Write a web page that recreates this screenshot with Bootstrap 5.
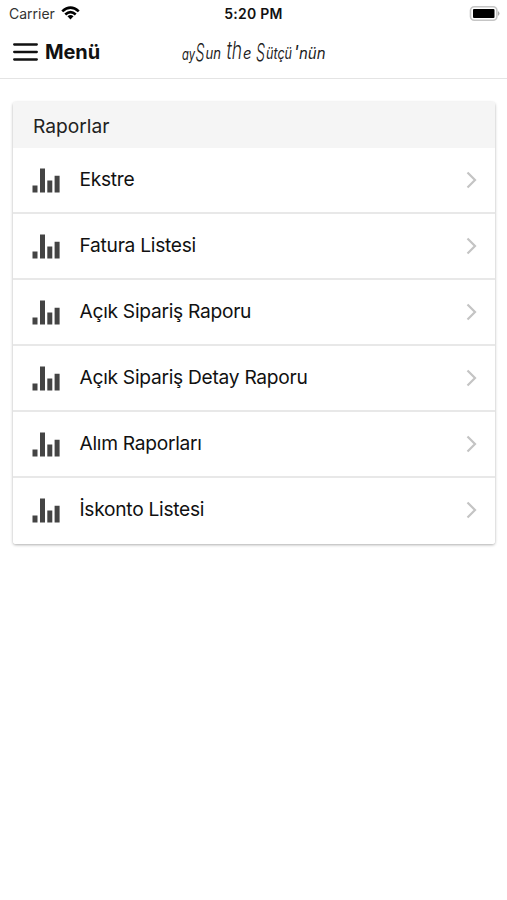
<!DOCTYPE html>
<html lang="tr">
<head>
<meta charset="utf-8">
<meta name="viewport" content="width=device-width, initial-scale=1">
<title>Raporlar</title>
<link href="https://cdn.jsdelivr.net/npm/bootstrap@5.3.0/dist/css/bootstrap.min.css" rel="stylesheet">
<style>
body{font-family:Inter,"Liberation Sans",sans-serif;color:#111;background:#fff;min-height:900px}
.status{height:28px;padding:0 7px 0 9px;font-size:13.5px;line-height:27px}
.status>*{flex:1 1 0}
.carrier{color:#333;font-size:14px}
.carrier span{padding-bottom:2px}
.clock{font-weight:600;font-size:14px;letter-spacing:.25px;padding-right:2px}
.topbar{height:51px;border-bottom:1px solid #e4e4e4;padding:0 13px}
.topbar>*{flex:1 1 0}
.menu-btn{font-size:20px;font-weight:700;line-height:24px;color:#111;gap:7px}
.menu-btn span{padding-top:1px;letter-spacing:-.1px}
.reports{margin:23px 12px 0 13px;border-radius:3px;box-shadow:0 1px 3px rgba(0,0,0,.32)}
.reports-head{height:46px;background:#f5f5f5;padding:0 20px;font-size:19.2px;color:#222;line-height:49px;border-radius:3px 3px 0 0}
.report-row{height:66px;padding:0 18px 0 19px;border-color:#e8e8e8;font-size:19.2px;letter-spacing:-.28px;color:#111}
.list-group-flush>.report-row{border-width:0 0 2px}
.list-group-flush>.report-row:last-child{border-bottom-width:0;padding-bottom:2px;border-radius:0 0 3px 3px}
.report-name{margin-left:19.500px;line-height:24px;padding-bottom:3px}
.report-row .ms-auto{margin-bottom:1px}
.wordmark{flex:none;font-family:Inter,"Liberation Sans",sans-serif;font-style:italic;font-size:15px}
.wordmark .tall{font-size:24px;font-weight:300}
</style>
<script src="https://cdn.jsdelivr.net/npm/bootstrap@5.3.0/dist/js/bootstrap.bundle.min.js"></script>
</head>
<body>
<svg class="d-none">
  <symbol id="bars" viewBox="0 0 28 25"><path fill="#444" d="M.5 17.5h5v7h-5zM8 .5h5v24H8zM15.3 12.5h5v12h-5zM22.6 7.8h5v16.7h-5z"/></symbol>
  <symbol id="chev" viewBox="0 0 11 18"><path d="M1.500 1.500 9 9l-7.500 7.500" fill="none" stroke="#c4c4c4" stroke-width="2.200"/></symbol>
</svg>
<div class="status d-flex">
  <div class="d-flex align-items-center carrier"><span>Carrier</span>
    <svg width="19" height="14" viewBox="0 0 20 14" fill="none" stroke="#000" stroke-width="2.800" style="margin:0 0 2px 6px"><path d="M1.300 5.300Q10-2.700 18.700 5.300M4.500 8.500Q10 3.500 15.500 8.500"/><path d="M6.800 10.500Q10 7.700 13.200 10.500L10 13.800z" fill="#000" stroke="none"/></svg>
  </div>
  <div class="clock text-center">5:20 PM</div>
  <div class="d-flex justify-content-end align-items-center">
    <svg width="31" height="15" viewBox="0 0 31 15" style="margin-bottom:2px"><rect x="1.500" y=".8" width="26.400" height="13.400" rx="3.800" fill="#fff" stroke="#c5c5c5" stroke-width="1.600"/><rect x="4" y="3" width="21.500" height="9" rx="1" fill="#000"/><path d="M29 5q3 2.500 0 5z" fill="#aaa"/></svg>
  </div>
</div>
<nav class="topbar d-flex align-items-center">
  <div><a class="menu-btn d-inline-flex align-items-center text-decoration-none" href="#">
    <svg width="25" height="18" viewBox="0 0 25 18" stroke="#111" stroke-width="2.300" stroke-linecap="round"><path d="M1.200 1.500h22.600M1.200 9h22.600M1.200 16.500h22.600"/></svg><span>Menü</span></a></div>
  <svg class="wordmark" width="148" height="40" viewBox="180 36 148 40" fill="#222">
    <text x="182" y="63" textLength="13" lengthAdjust="spacingAndGlyphs">ay</text>
    <text class="tall" x="195.500" y="64" textLength="9" lengthAdjust="spacingAndGlyphs">S</text>
    <text x="205.500" y="62" textLength="15.500" lengthAdjust="spacingAndGlyphs">un</text>
    <text class="tall" x="226.500" y="62" textLength="15.500" lengthAdjust="spacingAndGlyphs">th</text>
    <text x="243" y="62" textLength="8.500" lengthAdjust="spacingAndGlyphs">e</text>
    <text class="tall" x="256" y="64" textLength="9" lengthAdjust="spacingAndGlyphs">S</text>
    <text x="266" y="62" textLength="26" lengthAdjust="spacingAndGlyphs">ütçü</text>
    <text x="293.500" y="62" font-size="18">'</text>
    <text x="299" y="62" textLength="26.500" lengthAdjust="spacingAndGlyphs">nün</text>
  </svg>
  <div></div>
</nav>
<main class="reports">
  <div class="reports-head">Raporlar</div>
  <div class="list-group list-group-flush">
    <a href="#" class="list-group-item report-row d-flex align-items-center"><svg width="28" height="25"><use href="#bars"/></svg><span class="report-name">Ekstre</span><svg class="ms-auto" width="11" height="18"><use href="#chev"/></svg></a>
    <a href="#" class="list-group-item report-row d-flex align-items-center"><svg width="28" height="25"><use href="#bars"/></svg><span class="report-name">Fatura Listesi</span><svg class="ms-auto" width="11" height="18"><use href="#chev"/></svg></a>
    <a href="#" class="list-group-item report-row d-flex align-items-center"><svg width="28" height="25"><use href="#bars"/></svg><span class="report-name">Açık Sipariş Raporu</span><svg class="ms-auto" width="11" height="18"><use href="#chev"/></svg></a>
    <a href="#" class="list-group-item report-row d-flex align-items-center"><svg width="28" height="25"><use href="#bars"/></svg><span class="report-name">Açık Sipariş Detay Raporu</span><svg class="ms-auto" width="11" height="18"><use href="#chev"/></svg></a>
    <a href="#" class="list-group-item report-row d-flex align-items-center"><svg width="28" height="25"><use href="#bars"/></svg><span class="report-name">Alım Raporları</span><svg class="ms-auto" width="11" height="18"><use href="#chev"/></svg></a>
    <a href="#" class="list-group-item report-row d-flex align-items-center"><svg width="28" height="25"><use href="#bars"/></svg><span class="report-name">İskonto Listesi</span><svg class="ms-auto" width="11" height="18"><use href="#chev"/></svg></a>
  </div>
</main>
</body>
</html>
